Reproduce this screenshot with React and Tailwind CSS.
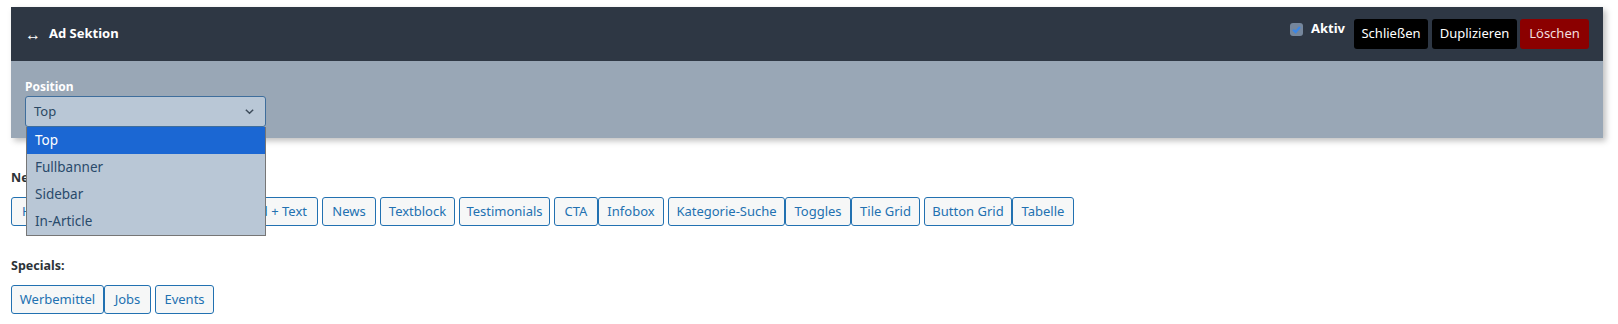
import React from 'react';

// Bausteine der Sektion: Buttons mit festen Breiten, damit die Reihe wie im Editor sitzt.
const neueButtons = [
  { label: 'Hero', w: 'w-[56px]', align: 'left' },
  { label: 'Slider', w: 'w-[84px]', gap: true },
  { label: 'Video', w: 'w-[62px]', gap: true },
  { label: 'Bild + Text', w: 'w-[93px]', gap: true, align: 'right' },
  { label: 'News', w: 'w-[54px]', gap: true },
  { label: 'Textblock', w: 'w-[75px]', gap: true },
  { label: 'Testimonials', w: 'w-[91px]', gap: true },
  { label: 'CTA', w: 'w-[44px]', gap: true },
  { label: 'Infobox', w: 'w-[66px]' },
  { label: 'Kategorie-Suche', w: 'w-[117px]', gap: true },
  { label: 'Toggles', w: 'w-[66px]' },
  { label: 'Tile Grid', w: 'w-[69px]' },
  { label: 'Button Grid', w: 'w-[88px]', gap: true },
  { label: 'Tabelle', w: 'w-[62px]' },
];

const specialButtons = [
  { label: 'Werbemittel', w: 'w-[93px]' },
  { label: 'Jobs', w: 'w-[47px]' },
  { label: 'Events', w: 'w-[59px]', gap: true },
];

const options = ['Top', 'Fullbanner', 'Sidebar', 'In-Article'];

const alignClass = {
  left: 'pl-[10px] text-left',
  right: 'pr-[10px] text-right',
  center: 'text-center',
};

function WpButton({ label, w, gap, align = 'center' }) {
  return (
    <button
      className={`${w} ${gap ? 'ml-[4px]' : ''} ${alignClass[align]} h-[29px] shrink-0 rounded-[3px] border border-[#2271b1] bg-[#f6f7f7] text-[13px] text-[#2271b1]`}
    >
      {label}
    </button>
  );
}

function HeaderButton({ children, danger, w }) {
  return (
    <button
      className={`${w} h-[30px] rounded-[3px] text-center text-[13px] ${danger ? 'bg-[#8b0000] text-[#f3dede]' : 'bg-black text-white'}`}
    >
      {children}
    </button>
  );
}

export default function App() {
  return (
    <div className="min-h-[324px] bg-white pl-[11px] pr-[15px] pt-[7px] font-['Segoe_UI','Noto_Sans',sans-serif]">
      <div className="shadow-[3px_3px_6px_rgba(0,0,0,0.25)]">
        {/* Kopfzeile */}
        <div className="flex h-[54px] items-center bg-[#2e3744] pl-[14px] pr-[14px]">
          <span className="text-[16px] leading-none text-white">↔</span>
          <span className="ml-[8px] text-[13px] font-bold text-white">Ad Sektion</span>
          <div className="ml-auto flex items-center">
            <label className="mb-[10px] mr-[9px] flex items-center">
              <span className="grid h-[13px] w-[13px] place-items-center rounded-[3px] bg-[#75869c] blur-[0.6px]">
                <svg viewBox="0 0 12 12" className="h-[11px] w-[11px]">
                  <path d="M2.3 6.2 L5 8.8 L9.8 3.2" fill="none" stroke="#3a86e6" strokeWidth="2.4" />
                </svg>
              </span>
              <span className="ml-[8px] text-[13px] font-bold text-white">Aktiv</span>
            </label>
            <div className="flex items-center">
              <HeaderButton w="w-[74px]">Schließen</HeaderButton>
              <span className="ml-[4px]">
                <HeaderButton w="w-[85px]">Duplizieren</HeaderButton>
              </span>
              <span className="ml-[3px]">
                <HeaderButton w="w-[69px]" danger>Löschen</HeaderButton>
              </span>
            </div>
          </div>
        </div>

        {/* Einstellungen */}
        <div className="h-[77px] bg-[#99a7b6] px-[14px] pt-[18px]">
          <div className="text-[12px] font-bold leading-[16px] text-white">Position</div>
          <div className="relative mt-[1px] w-[241px]">
            <div className="flex h-[31px] items-center justify-between rounded-[3px] border border-[#3f6e9c] bg-[#b9c7d6] pl-[8px] pr-[10px]">
              <span className="text-[13px] text-[#2a4763]">Top</span>
              <svg viewBox="0 0 12 12" className="h-[11px] w-[11px]">
                <path d="M2 4 L6 8 L10 4" fill="none" stroke="#3f4d5c" strokeWidth="1.6" />
              </svg>
            </div>
            <ul className="absolute left-[1px] top-[31px] z-10 w-[240px] border border-t-0 border-[#767676] bg-[#b9c7d6]">
              {options.map((o, i) => (
                <li
                  key={o}
                  className={`flex h-[27px] items-center pl-[8px] text-[13.5px] ${i === 0 ? 'bg-[#1b67d3] text-white' : 'text-[#294a6b]'}`}
                >
                  {o}
                </li>
              ))}
            </ul>
          </div>
        </div>
      </div>

      {/* Neue Sektionen */}
      <div className="mt-[32px] text-[12.5px] font-bold leading-[16px] text-[#2c3338]">Neue Sektion:</div>
      <div className="mt-[11px] flex">
        {neueButtons.map((b) => (
          <WpButton key={b.label} {...b} />
        ))}
      </div>

      <div className="mt-[32px] text-[12.5px] font-bold leading-[16px] text-[#2c3338]">Specials:</div>
      <div className="mt-[11px] flex">
        {specialButtons.map((b) => (
          <WpButton key={b.label} {...b} />
        ))}
      </div>
    </div>
  );
}
